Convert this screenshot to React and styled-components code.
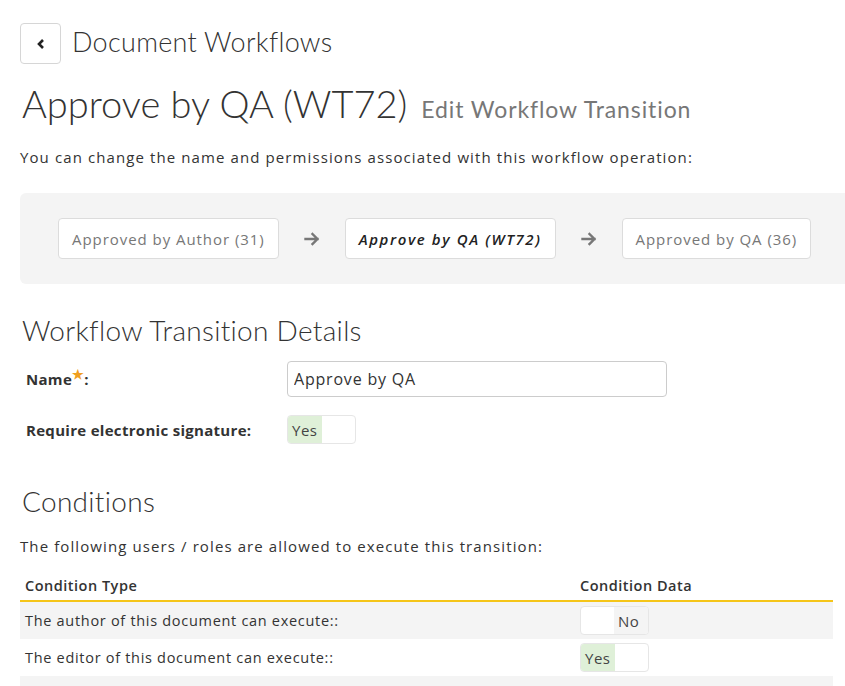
import React from 'react';
import styled, { createGlobalStyle } from 'styled-components';

const GlobalStyle = createGlobalStyle`
  html, body {
    margin: 0;
    padding: 0;
    background: #fff;
  }
  body {
    font-family: "Open Sans", "Noto Sans", sans-serif;
    color: #333;
  }
`;

const headingFont = `"Lato", "Open Sans", sans-serif`;

const Page = styled.div`
  padding: 23px 0 0 20px;
  width: 825px;
  overflow: hidden;
`;

const TopBar = styled.div`
  display: flex;
  align-items: center;
  gap: 11px;
`;

const BackButton = styled.button`
  width: 41px;
  height: 41px;
  border: 1px solid #d6d6d6;
  border-radius: 4px;
  background: #fff;
  display: flex;
  align-items: center;
  justify-content: center;
  padding: 0;
  color: #222;
`;

const Crumb = styled.span`
  font-family: ${headingFont};
  font-weight: 300;
  font-size: 27px;
  color: #333;
  letter-spacing: 0.3px;
  padding-bottom: 5px;
`;

const TitleRow = styled.h1`
  margin: 16px 0 0 2px;
  display: flex;
  align-items: baseline;
  gap: 14px;
  font-weight: 300;
`;

const Title = styled.span`
  font-family: ${headingFont};
  font-weight: 300;
  font-size: 38px;
  color: #333;
`;

const Subtitle = styled.span`
  font-family: ${headingFont};
  font-weight: 400;
  font-size: 23px;
  color: #777;
  letter-spacing: 0.9px;
`;

const Text = styled.p`
  margin: ${p => p.$margin || '0'};
  font-size: 15px;
  letter-spacing: 1.1px;
  color: #333;
`;

const FlowPanel = styled.div`
  margin-top: 26px;
  background: #f4f4f4;
  border-radius: 6px 0 0 6px;
  height: 91px;
  display: flex;
  align-items: center;
  padding-left: 38px;
  gap: 25px;
`;

const Step = styled.div`
  height: 41px;
  box-sizing: border-box;
  padding: 0 13px;
  display: flex;
  align-items: center;
  background: #fff;
  border: 1px solid #dcdcdc;
  border-radius: 4px;
  font-size: 15px;
  letter-spacing: ${p => (p.$current ? '1.6px' : '0.95px')};
  color: ${p => (p.$current ? '#222' : '#777')};
  font-style: ${p => (p.$current ? 'italic' : 'normal')};
  font-weight: ${p => (p.$current ? 600 : 400)};
`;

const Arrow = styled.span`
  display: flex;
  color: #777;
`;

const SectionTitle = styled.h2`
  margin: ${p => p.$margin};
  font-family: ${headingFont};
  font-weight: 300;
  font-size: 28px;
  color: #333;
  letter-spacing: 0.3px;
`;

const FieldRow = styled.div`
  display: grid;
  grid-template-columns: 261px 380px;
  align-items: center;
  margin-top: ${p => p.$top};
  padding-left: 6px;
`;

const Label = styled.label`
  font-weight: 700;
  font-size: 15px;
  letter-spacing: 0.3px;
  color: #333;
`;

const Star = styled.span`
  color: #f0a020;
  font-size: 13px;
  position: relative;
  top: -6px;
`;

const Input = styled.input`
  height: 36px;
  box-sizing: border-box;
  border: 1px solid #ccc;
  border-radius: 4px;
  padding: 0 6px;
  font-family: inherit;
  font-size: 16px;
  letter-spacing: 0.8px;
  color: #333;
`;

const Toggle = styled.div`
  width: 69px;
  height: 29px;
  box-sizing: border-box;
  border: 1px solid #e6e6e6;
  border-radius: 4px;
  overflow: hidden;
  display: flex;
  background: #fff;
  justify-content: ${p => (p.$on ? 'flex-start' : 'flex-end')};
`;

const ToggleLabel = styled.span`
  width: 34px;
  display: flex;
  align-items: center;
  padding-left: 4px;
  box-sizing: border-box;
  font-size: 15px;
  letter-spacing: 0.5px;
  color: #444;
  background: ${p => (p.$on ? '#dff0d8' : '#f4f4f4')};
`;

const Table = styled.div`
  margin-top: 20px;
  width: 813px;
`;

const HeadRow = styled.div`
  display: grid;
  grid-template-columns: 555px 1fr;
  padding: 0 0 5px 5px;
  border-bottom: 2px solid #f5c518;
  font-size: 14.5px;
  letter-spacing: 0.5px;
  font-weight: 600;
  color: #333;
`;

const Row = styled.div`
  display: grid;
  grid-template-columns: 555px 1fr;
  align-items: center;
  height: 37px;
  padding-left: 5px;
  background: ${p => (p.$alt ? '#f4f4f4' : '#fff')};
  font-size: 14.5px;
  letter-spacing: 0.7px;
  color: #333;
`;

const ArrowIcon = () => (
  <svg width="16" height="14" viewBox="0 0 16 14" fill="none" stroke="currentColor" strokeWidth="2.4" strokeLinecap="square">
    <path d="M1.5 7h12M8.5 2l5 5-5 5" />
  </svg>
);

const YesNo = ({ on }) => (
  <Toggle $on={on}>
    <ToggleLabel $on={on}>{on ? 'Yes' : 'No'}</ToggleLabel>
  </Toggle>
);

export default function App() {
  return (
    <>
      <GlobalStyle />
      <Page>
        <TopBar>
          <BackButton aria-label="Back">
            <svg width="10" height="12" viewBox="0 0 10 12" fill="none" stroke="currentColor" strokeWidth="2.6">
              <path d="M7 2L3 6l4 4" />
            </svg>
          </BackButton>
          <Crumb>Document Workflows</Crumb>
        </TopBar>

        <TitleRow>
          <Title>Approve by QA (WT72)</Title>
          <Subtitle>Edit Workflow Transition</Subtitle>
        </TitleRow>

        <Text $margin="21px 0 0">You can change the name and permissions associated with this workflow operation:</Text>

        <FlowPanel>
          <Step>Approved by Author (31)</Step>
          <Arrow><ArrowIcon /></Arrow>
          <Step $current>Approve by QA (WT72)</Step>
          <Arrow><ArrowIcon /></Arrow>
          <Step>Approved by QA (36)</Step>
        </FlowPanel>

        <SectionTitle $margin="29px 0 0 2px">Workflow Transition Details</SectionTitle>

        <FieldRow $top="14px">
          <Label>Name<Star>★</Star>:</Label>
          <Input defaultValue="Approve by QA" />
        </FieldRow>
        <FieldRow $top="18px">
          <Label>Require electronic signature:</Label>
          <YesNo on />
        </FieldRow>

        <SectionTitle $margin="40px 0 0 2px">Conditions</SectionTitle>
        <Text $margin="18px 0 0">The following users / roles are allowed to execute this transition:</Text>

        <Table>
          <HeadRow>
            <span>Condition Type</span>
            <span>Condition Data</span>
          </HeadRow>
          <Row $alt>
            <span>The author of this document can execute::</span>
            <YesNo on={false} />
          </Row>
          <Row>
            <span>The editor of this document can execute::</span>
            <YesNo on />
          </Row>
          <Row $alt />
        </Table>
      </Page>
    </>
  );
}
